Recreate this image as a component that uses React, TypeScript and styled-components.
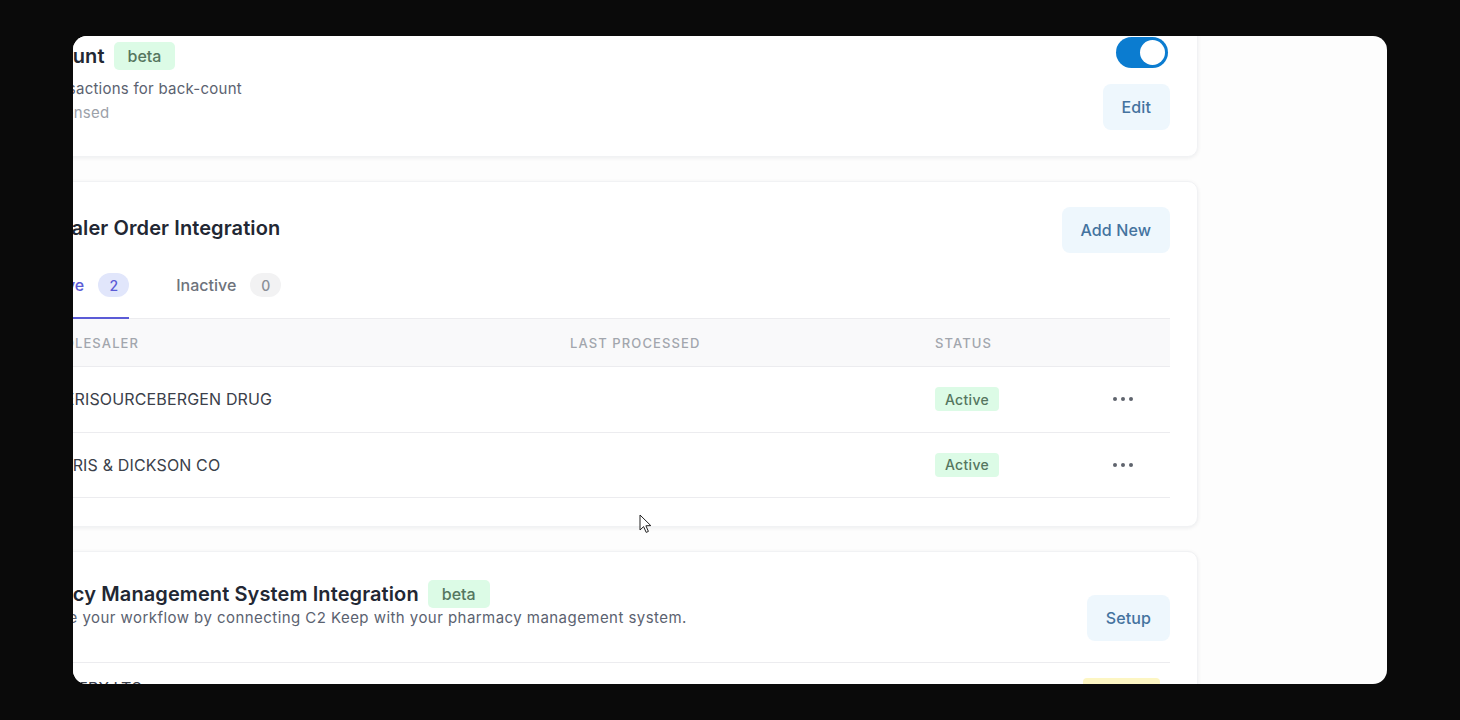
import styled, { createGlobalStyle } from 'styled-components';

const GlobalStyle = createGlobalStyle`
  * { box-sizing: border-box; }
  body {
    margin: 0;
    background: #0a0a0a;
    font-family: Inter, "Noto Sans", sans-serif;
  }
`;

const Frame = styled.div`
  width: 1460px;
  height: 720px;
  padding: 36px 73px;
`;

const Window = styled.div`
  position: relative;
  width: 1314px;
  height: 648px;
  border-radius: 14px;
  overflow: hidden;
  background: #fdfdfd;
`;

// the page is scrolled right and down inside the window
const Content = styled.div`
  display: flex;
  flex-direction: column;
  gap: 24px;
  width: 1228px;
  margin-left: -103px;
  margin-top: -28px;
`;

const Card = styled.section<{ $top?: number; $bottom?: number }>`
  background: #fff;
  border: 1px solid #f1f2f4;
  border-radius: 10px;
  box-shadow: 0 1px 4px rgba(15, 23, 42, 0.07);
  padding: ${(p) => p.$top ?? 25}px 27px ${(p) => p.$bottom ?? 29}px;
`;

const HeaderRow = styled.div`
  display: flex;
  justify-content: space-between;
  align-items: flex-start;
`;

const TitleBlock = styled.div<{ $top?: number }>`
  display: flex;
  flex-direction: column;
  margin-top: ${(p) => p.$top || 0}px;
`;

const TitleLine = styled.div`
  display: flex;
  align-items: center;
  gap: 9px;
`;

const Title = styled.h2<{ $top?: number }>`
  margin: ${(p) => p.$top || 0}px 0 0;
  font-size: 20px;
  line-height: 28px;
  font-weight: 600;
  color: #222733;
  letter-spacing: 0.1px;
`;

const Beta = styled.span`
  display: inline-flex;
  align-items: center;
  justify-content: center;
  height: 28px;
  padding: 0 14px;
  border-radius: 5px;
  background: #dcfbe6;
  color: #55765f;
  font-size: 16px;
  font-weight: 500;
`;

const Desc = styled.p<{ $muted?: boolean; $top?: number; $spacing?: number }>`
  margin: ${(p) => p.$top || 0}px 0 0;
  font-size: 15px;
  line-height: 24px;
  letter-spacing: ${(p) => p.$spacing ?? 0.25}px;
  color: ${(p) => (p.$muted ? '#9ca1a9' : '#5b6270')};
`;

const Actions = styled.div`
  display: flex;
  flex-direction: column;
  align-items: flex-end;
  gap: 16px;
`;

const Toggle = styled.div`
  position: relative;
  width: 52px;
  height: 31px;
  margin-right: 2px;
  border-radius: 16px;
  background: #0b7cd0;

  &::after {
    content: '';
    position: absolute;
    top: 3px;
    right: 3px;
    width: 25px;
    height: 25px;
    border-radius: 50%;
    background: #fff;
  }
`;

const SoftButton = styled.button<{ $top?: number }>`
  height: 46px;
  padding: 0 19px;
  margin-top: ${(p) => p.$top || 0}px;
  border: none;
  border-radius: 8px;
  background: #eef7fd;
  color: #44739f;
  font-family: Inter, sans-serif;
  font-size: 16px;
  font-weight: 500;
  letter-spacing: 0.1px;
`;

const Tabs = styled.div`
  display: flex;
  gap: 47px;
  padding-left: 38px;
  border-bottom: 1px solid #ececef;
`;

const Tab = styled.div<{ $active?: boolean }>`
  display: flex;
  align-items: center;
  gap: 14px;
  height: 66px;
  margin-bottom: -1px;
  border-bottom: 2px solid ${(p) => (p.$active ? '#5b5bd6' : 'transparent')};
  color: ${(p) => (p.$active ? '#5b5bd6' : '#6e737c')};
  font-size: 16px;
  font-weight: 500;
`;

const Count = styled.span<{ $active?: boolean }>`
  display: inline-flex;
  align-items: center;
  justify-content: center;
  width: 31px;
  height: 24px;
  border-radius: 12px;
  background: ${(p) => (p.$active ? '#e1e6fb' : '#f2f2f3')};
  color: ${(p) => (p.$active ? '#5b5bd6' : '#8a8f97')};
  font-size: 14px;
`;

const Grid = styled.div`
  display: grid;
  grid-template-columns: 544px 365px 1fr 90px;
`;

const HeadRow = styled(Grid)`
  height: 48px;
  align-items: center;
  background: #f9f9fa;
  border-bottom: 1px solid #ececef;
`;

const HeadCell = styled.div`
  padding-left: 41px;
  font-size: 13px;
  font-weight: 500;
  letter-spacing: 1.1px;
  color: #a2a6ad;
  text-transform: uppercase;

  &:nth-child(2), &:nth-child(3) { padding-left: 28px; }
`;

const BodyRow = styled(Grid)`
  height: 65.5px;
  align-items: center;
  border-bottom: 1px solid #ececef;
`;

const Cell = styled.div`
  padding-left: 41px;
  font-size: 16px;
  letter-spacing: 0.15px;
  color: #3b404a;

  &:nth-child(2), &:nth-child(3) { padding-left: 28px; }
`;

const Status = styled.span`
  display: inline-flex;
  align-items: center;
  height: 24px;
  padding: 0 10px;
  border-radius: 4px;
  background: #dcfbe6;
  color: #55765f;
  font-size: 14px;
  font-weight: 500;
  letter-spacing: 0.3px;
`;

const More = styled.div`
  display: flex;
  justify-content: center;
  gap: 4px;
  padding-right: 4px;

  span {
    width: 4px;
    height: 4px;
    border-radius: 50%;
    background: #5f646d;
  }
`;

const Section = styled.div`
  padding: 2px 0 21px;
  border-bottom: 1px solid #ececef;
`;

const SystemRow = styled.div`
  display: flex;
  justify-content: space-between;
  align-items: flex-start;
  padding: 15px 10px 0 41px;
`;

const SystemName = styled.span`
  font-size: 16px;
  color: #3b404a;
`;

const Pending = styled.span`
  width: 77px;
  height: 24px;
  border-radius: 4px;
  background: #fdf6c3;
`;

const Cursor = styled.svg`
  position: absolute;
  left: 566px;
  top: 478px;
`;

const wholesalers = ['AMERISOURCEBERGEN DRUG', 'HARRIS & DICKSON CO'];

function Dots() {
  return (
    <More>
      <span />
      <span />
      <span />
    </More>
  );
}

export default function App() {
  return (
    <>
      <GlobalStyle />
      <Frame>
        <Window>
          <Content>
            <Card $top={28} $bottom={26}>
              <HeaderRow>
                <TitleBlock $top={5}>
                  <TitleLine>
                    <Title>Bulk Count</Title>
                    <Beta>beta</Beta>
                  </TitleLine>
                  <Desc $top={7}>Sync transactions for back-count</Desc>
                  <Desc $muted>Pills Dispensed</Desc>
                </TitleBlock>
                <Actions>
                  <Toggle />
                  <SoftButton>Edit</SoftButton>
                </Actions>
              </HeaderRow>
            </Card>

            <Card $bottom={28}>
              <HeaderRow>
                <Title $top={7}>Wholesaler Order Integration</Title>
                <SoftButton>Add New</SoftButton>
              </HeaderRow>
              <Tabs>
                <Tab $active>
                  Active <Count $active>2</Count>
                </Tab>
                <Tab>
                  Inactive <Count>0</Count>
                </Tab>
              </Tabs>
              <HeadRow>
                <HeadCell>Wholesaler</HeadCell>
                <HeadCell>Last Processed</HeadCell>
                <HeadCell>Status</HeadCell>
                <HeadCell />
              </HeadRow>
              {wholesalers.map((name) => (
                <BodyRow key={name}>
                  <Cell>{name}</Cell>
                  <Cell />
                  <Cell>
                    <Status>Active</Status>
                  </Cell>
                  <Dots />
                </BodyRow>
              ))}
            </Card>

            <Card $top={26}>
              <Section>
                <HeaderRow>
                  <TitleBlock>
                    <TitleLine>
                      <Title>Pharmacy Management System Integration</Title>
                      <Beta>beta</Beta>
                    </TitleLine>
                    <Desc $top={-2} $spacing={0.45}>
                      Streamline your workflow by connecting C2 Keep with your pharmacy management system.
                    </Desc>
                  </TitleBlock>
                  <SoftButton $top={15}>Setup</SoftButton>
                </HeaderRow>
              </Section>
              <SystemRow>
                <SystemName>PRIMERX LTS</SystemName>
                <Pending />
              </SystemRow>
            </Card>
          </Content>

          <Cursor width="14" height="20" viewBox="0 0 14 20">
            <path d="M1 1 L1 16 L4.6 12.6 L7.2 18.4 L9.4 17.4 L6.9 11.8 L11.8 11.6 Z" fill="#fff" stroke="#222" strokeWidth="1" strokeLinejoin="round" />
          </Cursor>
        </Window>
      </Frame>
    </>
  );
}
